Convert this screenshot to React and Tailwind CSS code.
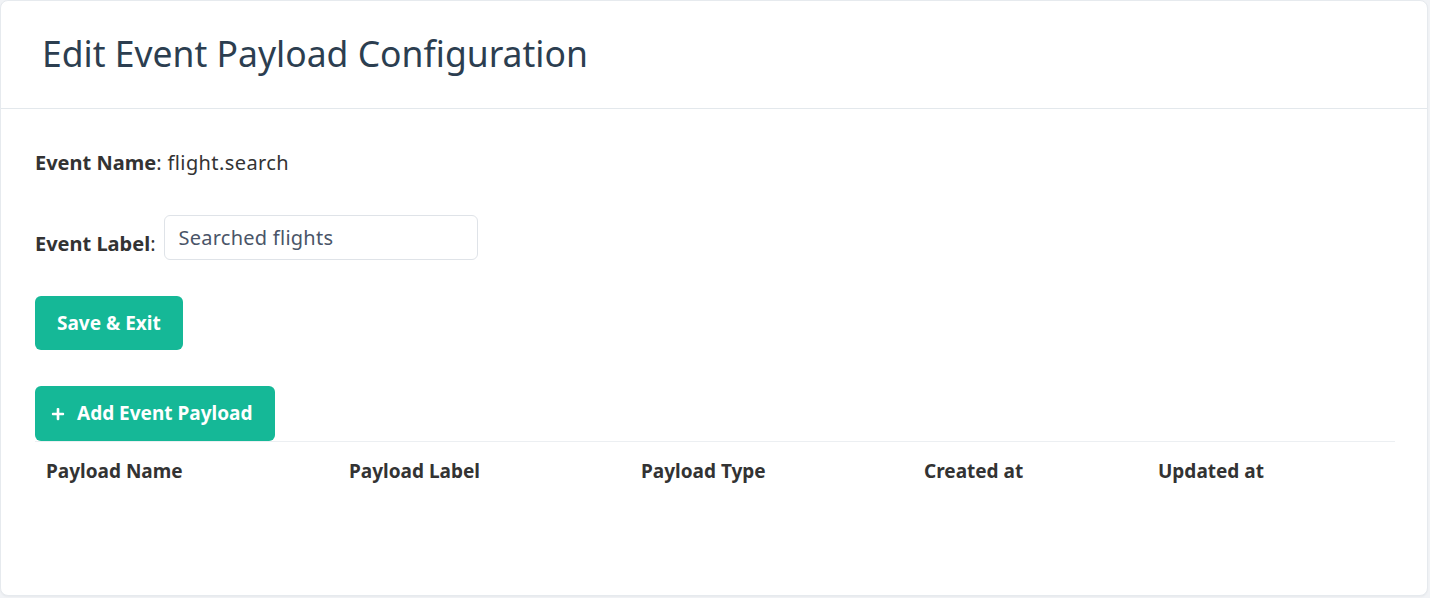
import { FaPlus } from 'react-icons/fa';

const columns = ['Payload Name', 'Payload Label', 'Payload Type', 'Created at', 'Updated at'];
const colWidths = ['w-[303px]', 'w-[292px]', 'w-[283px]', 'w-[234px]', ''];

export default function App() {
  return (
    <div className="min-h-[598px] w-[1430px] bg-[#f1f3f6] font-['Noto_Sans',sans-serif]">
      <div className="w-[1428px] h-[596px] bg-white rounded-lg border border-[#e6eaee] shadow-[0_1px_2px_rgba(0,0,0,0.04)]">
        {/* Header */}
        <div className="h-[108px] flex items-center pl-[41px] border-b border-[#e3e8ec]">
          <h1 className="text-[35.5px] leading-none text-[#2c3e50] -mt-[1px]">Edit Event Payload Configuration</h1>
        </div>

        {/* Body */}
        <div className="px-[34px] pt-[40px]">
          <p className="text-[20px] leading-[27px] text-[#333]">
            <span className="font-bold">Event Name</span>
            <span className="tracking-[0.4px]">: flight.search</span>
          </p>

          <div className="flex items-end mt-[39px]">
            <label className="text-[20px] leading-[27px] text-[#333] mb-[3px]">
              <span className="font-bold">Event Label</span>:
            </label>
            <input
              type="text"
              placeholder="Searched flights"
              className="ml-[8px] w-[314px] h-[45px] rounded-md border border-[#dfe3e8] px-[14px] text-[20px] tracking-[0.25px] text-[#4a5568] placeholder:text-[#4a5568] outline-none"
            />
          </div>

          <button className="mt-[36px] h-[54px] px-[22px] rounded-md bg-[#15b897] text-white text-[19px] font-bold">
            Save &amp; Exit
          </button>

          <div className="mt-[36px]">
            <button className="h-[55px] pl-[16px] pr-[23px] rounded-md bg-[#15b897] text-white text-[19px] font-bold flex items-center gap-[12px]">
              <FaPlus className="w-[14px] h-[14px]" />
              Add Event Payload
            </button>
          </div>

          <table className="w-[1360px] border-t border-[#eceff2] text-left">
            <thead>
              <tr>
                {columns.map((col, i) => (
                  <th
                    key={col}
                    className={`${colWidths[i]} px-[11px] pt-[16px] pb-[16px] text-[19px] leading-[27px] font-bold text-[#333]`}
                  >
                    {col}
                  </th>
                ))}
              </tr>
            </thead>
            <tbody />
          </table>
        </div>
      </div>
    </div>
  );
}
